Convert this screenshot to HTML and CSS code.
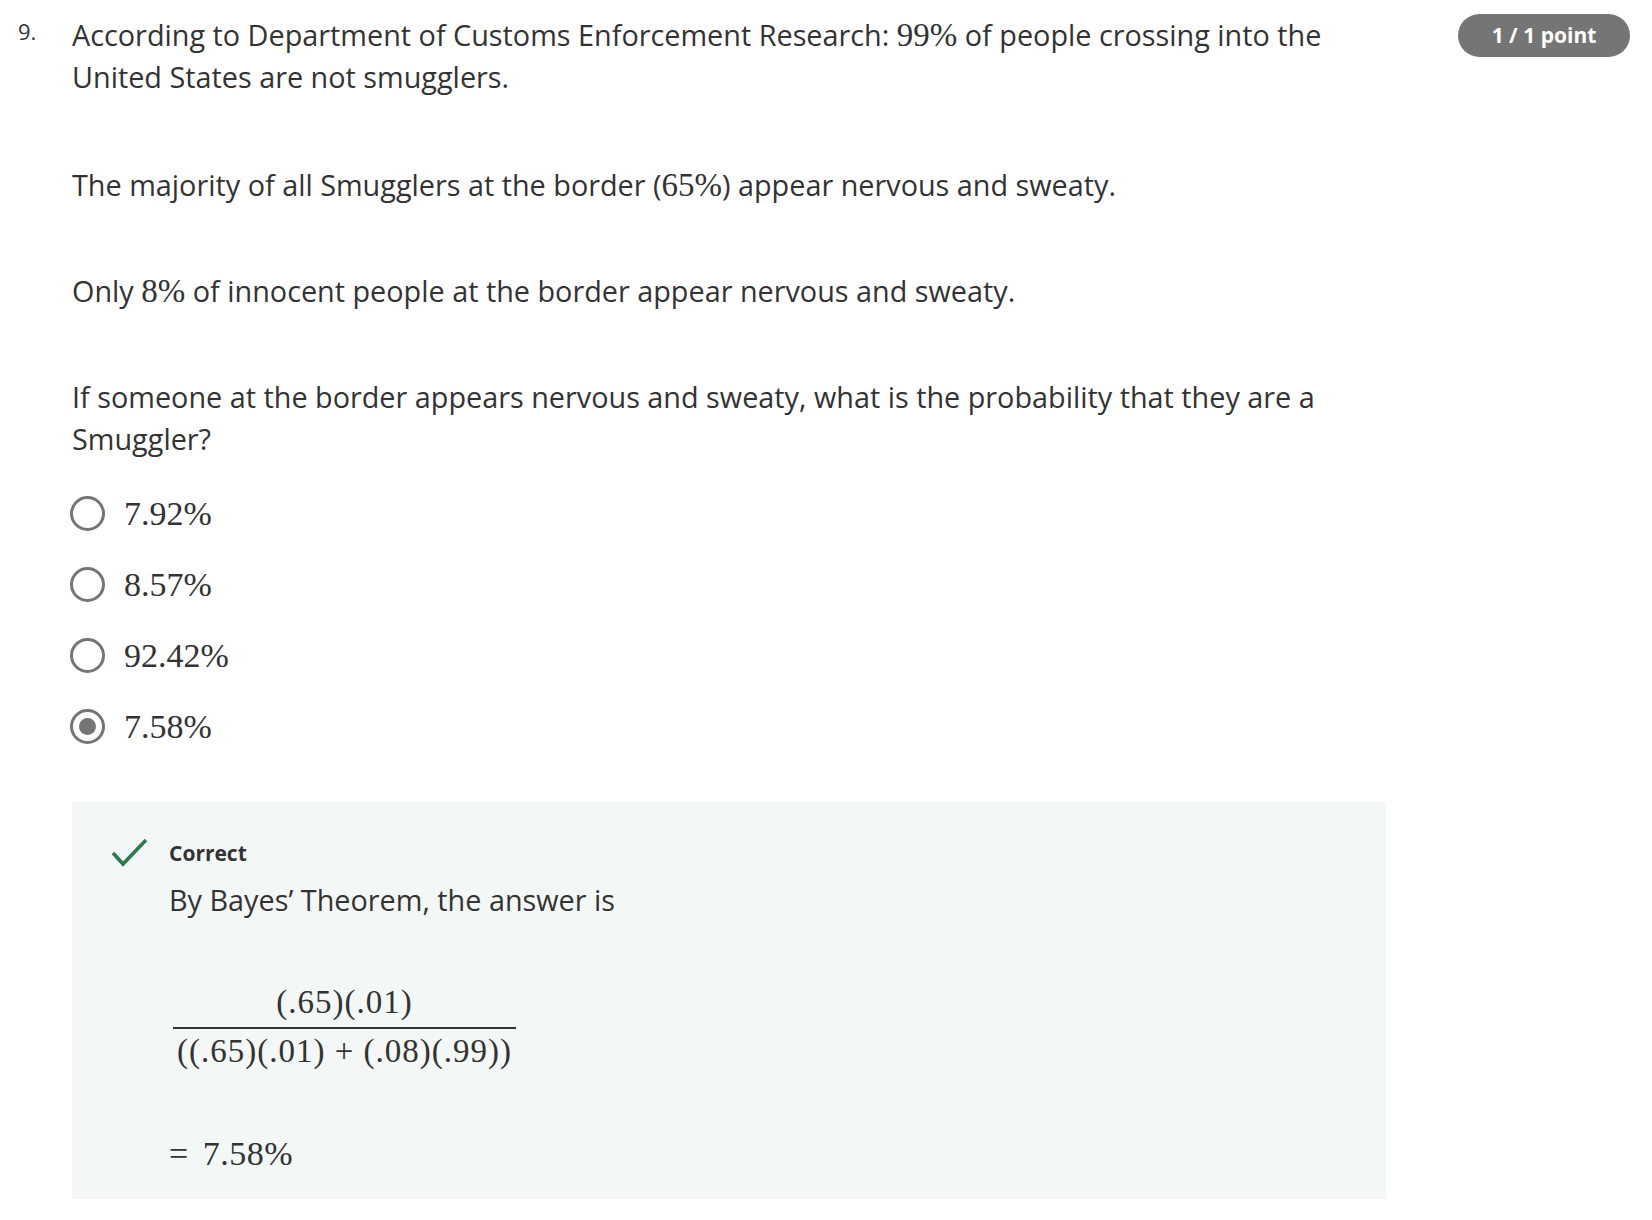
FILE: index.html
```html
<!DOCTYPE html>
<html lang="en">
<head>
<meta charset="utf-8">
<title>Question 9</title>
<link rel="stylesheet" href="styles.css">
</head>
<body>
<div class="question">
  <div class="qnum">9.</div>
  <div class="qbody">
    <p class="para first">According to Department of Customs Enforcement Research: <span class="m">99%</span> of people crossing into the United States are not smugglers.</p>
    <p class="para">The majority of all Smugglers at the border (<span class="m">65%</span>) appear nervous and sweaty.</p>
    <p class="para">Only <span class="m">8%</span> of innocent people at the border appear nervous and sweaty.</p>
    <p class="para last">If someone at the border appears nervous and sweaty, what is the probability that they are a Smuggler?</p>

    <div class="options">
      <div class="opt"><span class="radio"></span><span class="opt-label">7.92%</span></div>
      <div class="opt"><span class="radio"></span><span class="opt-label">8.57%</span></div>
      <div class="opt"><span class="radio"></span><span class="opt-label">92.42%</span></div>
      <div class="opt"><span class="radio checked"></span><span class="opt-label">7.58%</span></div>
    </div>

    <div class="feedback">
      <div class="fb-head">
        <svg class="check" width="38" height="30" viewBox="0 0 38 30" aria-hidden="true">
          <path d="M2 15 L12 26 L35 2" fill="none" stroke="#2b7b4f" stroke-width="3.6"/>
        </svg>
        <span class="fb-title">Correct</span>
      </div>
      <div class="fb-body">
        <p class="fb-text">By Bayes’ Theorem, the answer is</p>
        <div class="frac">
          <span class="num">(.65)(.01)</span>
          <span class="den">((.65)(.01) + (.08)(.99))</span>
        </div>
        <div class="result"><span class="eq">=</span>7.58%</div>
      </div>
    </div>
  </div>
  <div class="badge">1 / 1 point</div>
</div>
</body>
</html>
```

FILE: styles.css
```css
html, body {
  margin: 0;
  padding: 0;
  background: #ffffff;
}

body {
  font-family: "Open Sans", "Liberation Sans", sans-serif;
  color: #333333;
}

.question {
  display: flex;
  align-items: flex-start;
  padding: 14px 22px 0 18px;
}

.qnum {
  width: 54px;
  flex: none;
  font-size: 22px;
  line-height: 22px;
  padding-top: 6px;
  color: #333333;
}

.qbody {
  width: 1314px;
  flex: none;
}

.para {
  margin: 0 0 64px 0;
  font-size: 28.8px;
  line-height: 42px;
}

.para.first {
  margin-bottom: 66px;
}

.para.last {
  margin-bottom: 0;
}

.m {
  font-family: "Liberation Serif", "Times New Roman", serif;
  font-size: 33px;
  line-height: 1;
}

.options {
  margin-top: 18px;
}

.opt {
  display: flex;
  align-items: center;
  height: 71px;
}

.radio {
  box-sizing: border-box;
  width: 35px;
  height: 35px;
  margin-left: -2px;
  border: 3px solid #757575;
  border-radius: 50%;
  display: flex;
  align-items: center;
  justify-content: center;
  flex: none;
}

.radio.checked::after {
  content: "";
  width: 17px;
  height: 17px;
  border-radius: 50%;
  background: #757575;
}

.opt-label {
  margin-left: 19px;
  font-family: "Liberation Serif", "Times New Roman", serif;
  font-size: 34px;
  line-height: 40px;
  color: #333333;
}

.feedback {
  margin-top: 40px;
  background: #f3f8f6;
  height: 397px;
  box-sizing: border-box;
  padding: 37px 0 0 39px;
}

.fb-head {
  display: flex;
  align-items: center;
  height: 28px;
}

.check {
  flex: none;
  margin-right: 20px;
  margin-top: 0;
}

.fb-title {
  font-weight: 700;
  font-size: 21px;
  line-height: 28px;
  color: #333333;
}

.fb-body {
  padding-left: 58px;
}

.fb-text {
  margin: 13px 0 0 0;
  font-size: 28.8px;
  line-height: 40px;
}

.frac {
  display: inline-flex;
  flex-direction: column;
  align-items: center;
  margin-top: 64px;
  margin-left: 4px;
  font-family: "Liberation Serif", "Times New Roman", serif;
  font-size: 33px;
  letter-spacing: 1px;
  color: #333333;
}

.num {
  line-height: 36px;
  padding: 0 4px 7px;
}

.den {
  line-height: 36px;
  padding: 4px 4px 0;
  border-top: 2px solid #333333;
}

.result {
  margin-top: 65px;
  font-family: "Liberation Serif", "Times New Roman", serif;
  font-size: 34px;
  line-height: 40px;
  letter-spacing: 0.5px;
  color: #333333;
}

.eq {
  margin-right: 14px;
}

.badge {
  margin-left: auto;
  width: 172px;
  height: 43px;
  border-radius: 22px;
  background: #757575;
  color: #ffffff;
  font-weight: 700;
  font-size: 21px;
  line-height: 43px;
  text-align: center;
  flex: none;
}
```
